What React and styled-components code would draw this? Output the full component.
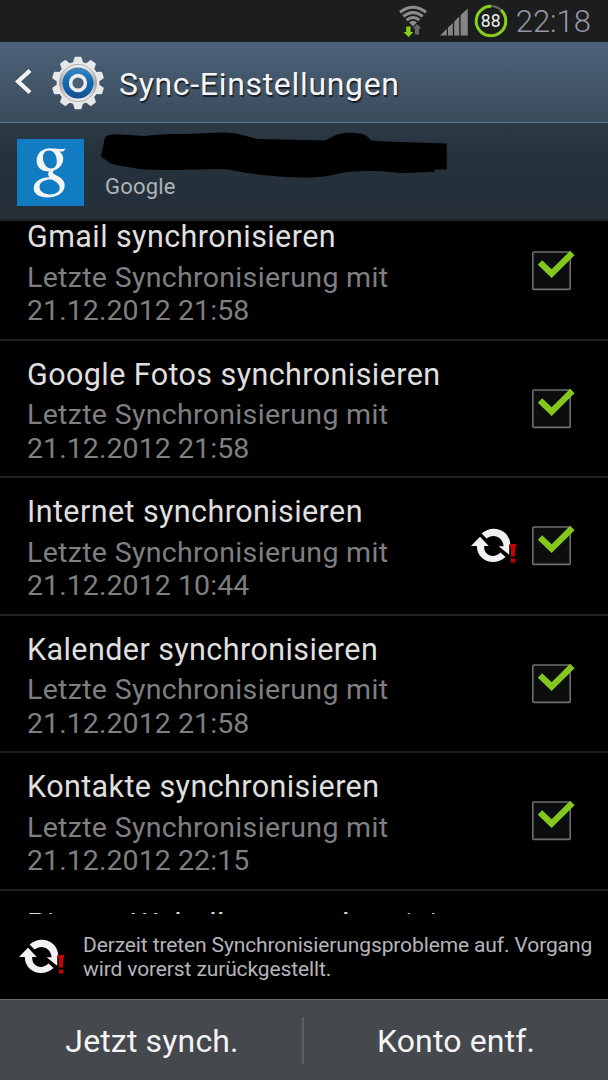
import styled, { createGlobalStyle } from "styled-components";

const GlobalStyle = createGlobalStyle`
  * {
    box-sizing: border-box;
  }

  body {
    margin: 0;
    background: #000;
    font-family: Roboto, "Liberation Sans", sans-serif;
  }
`;

const LAST_SYNC = "Letzte Synchronisierung mit";

const services = [
  { title: "Gmail synchronisieren", date: "21.12.2012 21:58" },
  { title: "Google Fotos synchronisieren", date: "21.12.2012 21:58" },
  { title: "Internet synchronisieren", date: "21.12.2012 10:44", problem: true },
  { title: "Kalender synchronisieren", date: "21.12.2012 21:58" },
  { title: "Kontakte synchronisieren", date: "21.12.2012 22:15" },
  { title: "Picasa-Webalben synchronisieren", spacing: 0.53 },
];

function WifiIcon() {
  return (
    <svg width="30" height="34" viewBox="0 0 30 34" fill="none">
      <g stroke="#8c8c8c" strokeWidth="3">
        <path d="M2 8.3 Q15 -1.8 28 8.3" />
        <path d="M5.3 12.4 Q15 4.6 24.7 12.4" />
        <path d="M8.6 16.2 Q15 10.8 21.4 16.2" />
      </g>
      <path d="M11 18.2 Q15 15.2 19 18.2 L15 22.4 Z" fill="#8c8c8c" />
      <path d="M8.2 22.5 h4.4 v5.5 h2.8 L10.5 33 L5.6 28 h2.6 Z" fill="#86d01c" />
      <path d="M17 30.5 v-6 h-2.2 L19 20 L23.2 24.5 h-2.2 v6 Z" fill="#686868" />
    </svg>
  );
}

function SignalIcon() {
  return (
    <svg width="28" height="28" viewBox="0 0 28 28" fill="#858585">
      <path d="M0 27.5 L6.8 20.8 V27.5 Z" />
      <path d="M8 19.5 L12.8 15 V27.5 H8 Z" />
      <path d="M14.2 13.4 L19.2 8.6 V27.5 H14.2 Z" />
      <path d="M20.6 7 L27.8 0.4 V27.5 H20.6 Z" />
    </svg>
  );
}

function GearIcon() {
  const teeth = [0, 36, 72, 108, 144, 180, 216, 252, 288, 324];
  return (
    <svg width="52" height="54" viewBox="-26 -27 52 54">
      <defs>
        <linearGradient id="gearMetal" x1="0" y1="0" x2="0" y2="1">
          <stop offset="0" stopColor="#f2f2f2" />
          <stop offset="0.5" stopColor="#a2a6ab" />
          <stop offset="1" stopColor="#f0f0f0" />
        </linearGradient>
        <linearGradient id="gearBlue" x1="0" y1="0" x2="0" y2="1">
          <stop offset="0" stopColor="#3e86c0" />
          <stop offset="0.5" stopColor="#0f68b0" />
          <stop offset="1" stopColor="#164f8f" />
        </linearGradient>
      </defs>
      <g fill="#e8e8e9">
        {teeth.map((angle) => (
          <path key={angle} d="M-5.5 -19 L-3.5 -25.5 Q-3.3 -26.2 -2.5 -26.2 H2.5 Q3.3 -26.2 3.5 -25.5 L5.5 -19 Z" transform={`rotate(${angle})`} />
        ))}
      </g>
      <circle r="21.4" fill="#e8e8e9" />
      <circle r="18.6" fill="url(#gearMetal)" stroke="#a6a9ac" strokeWidth="0.9" />
      <circle r="15.4" fill="url(#gearBlue)" />
      <circle r="7.4" fill="#4a5f75" stroke="#ececee" strokeWidth="3.6" />
    </svg>
  );
}

function GoogleLogo() {
  return (
    <svg width="67" height="67" viewBox="0 0 67 67" fill="#f4f4f4">
      <path
        fillRule="evenodd"
        d="M33 9.3 C37 9.5 43 10.5 48.8 9.4 L46.2 12.4 H42.4 C45.4 14.6 46.4 17.4 46.2 20.3
        C45.8 26.4 41 30.5 37 31.4 C35.2 32.6 35.6 34.2 37.4 35.2 C43 38.3 47.9 40.5 47.7 46.6
        C47.5 53.9 40.2 58.6 30.6 58.5 C22.3 58.4 16.5 54.8 16.7 49 C16.9 42.3 24 38.4 32.5 38.2
        C30.8 36.6 30.8 34 32 32.2 C25 33.2 19.6 28.6 19.6 21.8 C19.6 14.3 25.3 9.2 33 9.3 Z
        M32 11.6 C28 11.7 25.6 14.8 26 19.6 C26.5 25.2 29.8 29.8 34.2 29.6 C38 29.4 40 26.4 39.8 21.8
        C39.6 16.2 36.6 11.5 32 11.6 Z
        M34.6 40.4 C27.6 40.3 22.4 43 22.5 47.8 C22.6 52.6 27 55.4 33 55.4 C39.2 55.4 42.7 52.8 42.7 48.8
        C42.7 44.8 39.3 42.6 34.6 40.4 Z"
      />
    </svg>
  );
}

function Scribble() {
  return (
    <svg width="348" height="46" viewBox="0 0 348 46">
      <path d="M4 5 C9 2 14 2 19 2.5 L44 4 C60 2 75 2 84 2 L121 0.5 C140 1 146 5 157 7 L224 8.5 C232 5 236 0.8 248 0.8 C262 0.8 266 3 270 8.5 L284 9.5 L345.7 11.5 V37.5 H333.5 V40 C320 40 310 41 299 41 L279 39 C262 39 252 39 240 41 C228 44 218 45.5 208 45.5 C185 45.5 170 44 157 42.5 C142 41 130 37 119 37 L74 38 C55 38 40 38 30 35.5 C20 34 14 33 9 31 L0 24.5 Z" fill="#000" />
    </svg>
  );
}

function SyncProblemIcon() {
  return (
    <svg width="46" height="36" viewBox="0 0 46 36">
      <g fill="#f2f2f2">
        <path d="M10.6 5.6 C20.6 -4 38.2 1 39.2 15.7 L38.2 17 V26.7 L27.6 18.3 H32.6 C32 8.7 21.8 5 15.6 10.6 Z" />
        <path d="M0 18 L9 8.7 L17.8 18 H13.2 C12.6 27.6 22.7 31.4 29.5 24.6 L34.6 29.1 C23.5 39 6 33.3 5.8 18 Z" />
      </g>
      <path d="M38.8 16 H45.2 V18 L44 20.2 V28.4 H40 V20.2 L38.8 18 Z M40 30.6 H44.4 V34.6 H40 Z" fill="#c80000" />
    </svg>
  );
}

function Checkbox() {
  return (
    <svg width="44" height="42" viewBox="0 0 44 42">
      <rect x="1.8" y="2" width="37.4" height="37.4" rx="1" fill="#0b0d0f" stroke="#6d6e70" strokeWidth="1.6" />
      <path d="M9 12.4 L20.6 23.6 L41.4 3" fill="none" stroke="#84c81e" strokeWidth="6.2" />
    </svg>
  );
}

export default function App() {
  return (
    <Screen>
      <GlobalStyle />
      <StatusBar>
        <WifiIcon />
        <SignalIcon />
        <Battery>
          <svg width="34" height="34" viewBox="0 0 34 34" fill="none">
            <circle cx="17" cy="17" r="14.8" stroke="#626262" strokeWidth="2.2" />
            <circle cx="17" cy="17" r="14.8" stroke="#86d01c" strokeWidth="3" pathLength="100" strokeDasharray="88 12" transform="rotate(-47 17 17)" />
          </svg>
          <BatteryLevel>88</BatteryLevel>
        </Battery>
        <Clock>22:18</Clock>
      </StatusBar>

      <ActionBar>
        <svg width="17" height="28" viewBox="0 0 17 28" fill="none">
          <path d="M15 2.5 L3 13.5 L15 24.5" stroke="#f4f4f4" strokeWidth="4.2" />
        </svg>
        <GearIcon />
        <BarTitle>Sync-Einstellungen</BarTitle>
      </ActionBar>

      <Account>
        <LogoTile>
          <GoogleLogo />
        </LogoTile>
        <AccountInfo>
          <Scribble />
          <AccountType>Google</AccountType>
        </AccountInfo>
      </Account>

      <List>
        {services.map((service) => (
          <Row key={service.title}>
            <RowText>
              <RowTitle $spacing={service.spacing}>{service.title}</RowTitle>
              {service.date && (
                <>
                  <RowLine $spacing={0.32}>{LAST_SYNC}</RowLine>
                  <RowLine $spacing={0.07}>{service.date}</RowLine>
                </>
              )}
            </RowText>
            {service.problem && <SyncProblemIcon />}
            <Checkbox />
          </Row>
        ))}
      </List>

      <Notice>
        <SyncProblemIcon />
        <NoticeText>
          Derzeit treten Synchronisierungsprobleme auf. Vorgang
          <br />
          wird vorerst zurückgestellt.
        </NoticeText>
      </Notice>

      <ButtonBar>
        <BarButton>Jetzt synch.</BarButton>
        <Separator />
        <BarButton>Konto entf.</BarButton>
      </ButtonBar>
    </Screen>
  );
}

const Screen = styled.div`
  display: flex;
  flex-direction: column;
  width: 608px;
  height: 1080px;
  overflow: hidden;
  background: #000;
  white-space: nowrap;

  svg {
    display: block;
    flex: none;
  }
`;

const StatusBar = styled.div`
  display: flex;
  flex: none;
  align-items: center;
  justify-content: flex-end;
  height: 42px;
  padding-right: 17px;
  background: #1c1e1d;

  svg + svg {
    margin: 1px 6px 0 12px;
  }
`;

const Battery = styled.div`
  display: grid;
  place-items: center;

  > * {
    grid-area: 1 / 1;
  }
`;

const BatteryLevel = styled.span`
  color: #f0f0f0;
  font-size: 17.5px;
  line-height: 20px;
`;

const Clock = styled.span`
  margin: 1px 0 0 8px;
  color: #9497a5;
  font-size: 31px;
  font-weight: 300;
  line-height: 40px;
`;

const ActionBar = styled.div`
  display: flex;
  flex: none;
  align-items: center;
  height: 81px;
  padding-left: 15px;
  background: linear-gradient(#4b6379, #43566a 50%, #3b4b5c);
  border-bottom: 1px solid #5a7691;

  svg + svg {
    margin: 1px 0 0 20px;
  }
`;

const BarTitle = styled.h1`
  margin: 4px 0 0 15px;
  color: #f5f5f5;
  font-size: 32px;
  font-weight: 400;
  letter-spacing: 0.68px;
  line-height: 40px;
  text-shadow: 1px 2px 1px rgba(0, 0, 0, 0.65);
`;

const Account = styled.div`
  display: flex;
  flex: none;
  height: 98px;
  padding: 16px 0 0 17px;
  background: linear-gradient(#2d3b47, #25323c 32%, #242f38);
  border-bottom: 2px solid #1d2225;
`;

const LogoTile = styled.div`
  width: 67px;
  height: 67px;
  background: #117cc2;
`;

const AccountInfo = styled.div`
  display: flex;
  flex-direction: column;
  margin: -7px 0 0 17px;
`;

const AccountType = styled.span`
  margin: -4px 0 0 4px;
  color: #aeb3b7;
  font-size: 22px;
  letter-spacing: 0.2px;
  line-height: 26px;
`;

const List = styled.div`
  display: flex;
  flex: none;
  flex-direction: column;
  justify-content: flex-start;
  height: 693px;
  overflow: hidden;

  > :first-child {
    margin-top: -18px;
  }
`;

const Row = styled.div`
  display: flex;
  flex: none;
  align-items: flex-start;
  height: 137.5px;
  padding: 12px 33px 0 27px;
  border-bottom: 2px solid #1d2122;

  > svg:last-child {
    margin-top: 35px;
  }

  > svg:not(:last-child) {
    margin: 38px 14px 0 0;
  }
`;

const RowText = styled.div`
  flex: 1;
  padding-top: 1px;
`;

const RowTitle = styled.div`
  margin-bottom: 2.6px;
  color: #dfdfdf;
  font-size: 30.5px;
  letter-spacing: ${(props) => props.$spacing ?? 0.41}px;
  line-height: 42px;
`;

const RowLine = styled.div`
  color: #7f7f81;
  font-size: 28.5px;
  letter-spacing: ${(props) => props.$spacing}px;
  line-height: 33.75px;
`;

const Notice = styled.div`
  display: flex;
  flex: none;
  align-items: center;
  height: 85px;
  padding-left: 19px;
  background: #000;
`;

const NoticeText = styled.p`
  margin: 0 0 0 18px;
  color: #b4b5ba;
  font-size: 21px;
  letter-spacing: -0.12px;
  line-height: 24px;
`;

const ButtonBar = styled.div`
  display: grid;
  flex: 1;
  grid-template-columns: 302px 2px 304px;
  align-items: center;
  background: #45484c;
  border-top: 1px solid #68696a;
`;

const BarButton = styled.button`
  padding: 1px 0 0;
  border: none;
  background: none;
  color: #f4f4f4;
  font-family: inherit;
  font-size: 32px;
  letter-spacing: 0.15px;
  line-height: 40px;

  &:first-child {
    padding-left: 2px;
  }
`;

const Separator = styled.div`
  height: 47px;
  background: #5d6063;
`;
